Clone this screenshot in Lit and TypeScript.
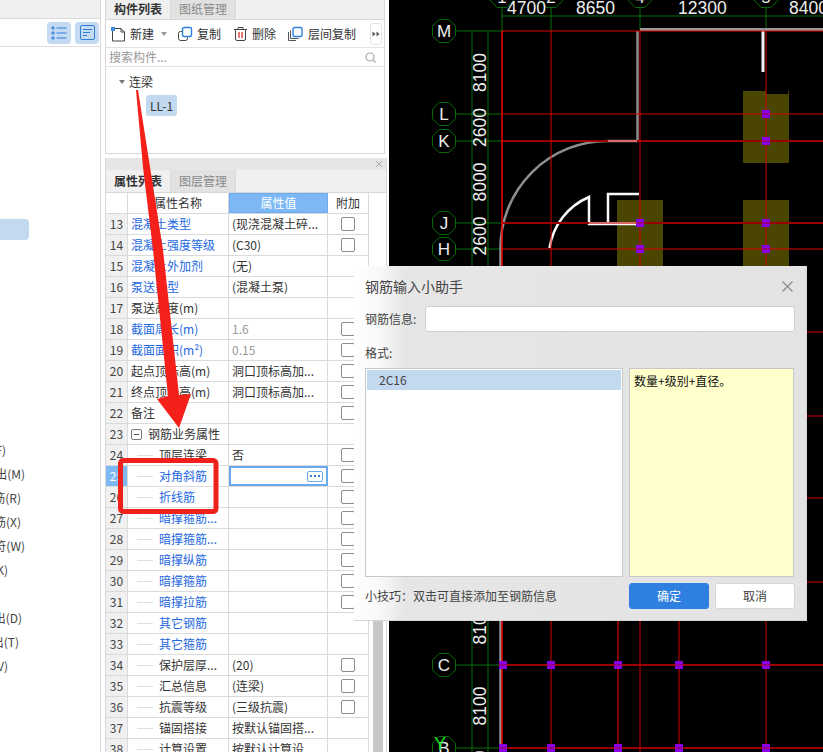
import { LitElement, css, html, svg } from "lit";
import { customElement } from "lit/decorators.js";

type Row = {
    no: number;
    name: string;
    value?: string;
    link?: boolean;
    check?: boolean;
    child?: boolean;
    muted?: boolean;
};

const rows: Row[] = [
    { no: 13, name: "混凝土类型", value: "(现浇混凝土碎...", link: true, check: true },
    { no: 14, name: "混凝土强度等级", value: "(C30)", link: true, check: true },
    { no: 15, name: "混凝土外加剂", value: "(无)", link: true },
    { no: 16, name: "泵送类型", value: "(混凝土泵)", link: true },
    { no: 17, name: "泵送高度(m)" },
    { no: 18, name: "截面周长(m)", value: "1.6", link: true, check: true, muted: true },
    { no: 19, name: "截面面积(m²)", value: "0.15", link: true, check: true, muted: true },
    { no: 20, name: "起点顶标高(m)", value: "洞口顶标高加...", check: true },
    { no: 21, name: "终点顶标高(m)", value: "洞口顶标高加...", check: true },
    { no: 22, name: "备注", check: true },
    { no: 23, name: "钢筋业务属性" },
    { no: 24, name: "顶层连梁", value: "否", child: true, check: true },
    { no: 25, name: "对角斜筋", child: true, link: true, check: true },
    { no: 26, name: "折线筋", child: true, link: true, check: true },
    { no: 27, name: "暗撑箍筋...", child: true, link: true, check: true },
    { no: 28, name: "暗撑箍筋...", child: true, link: true, check: true },
    { no: 29, name: "暗撑纵筋", child: true, link: true, check: true },
    { no: 30, name: "暗撑箍筋", child: true, link: true, check: true },
    { no: 31, name: "暗撑拉筋", child: true, link: true, check: true },
    { no: 32, name: "其它钢筋", child: true, link: true },
    { no: 33, name: "其它箍筋", child: true, link: true },
    { no: 34, name: "保护层厚...", value: "(20)", child: true, check: true },
    { no: 35, name: "汇总信息", value: "(连梁)", child: true, check: true },
    { no: 36, name: "抗震等级", value: "(三级抗震)", child: true, check: true },
    { no: 37, name: "锚固搭接", value: "按默认锚固搭...", child: true },
    { no: 38, name: "计算设置", value: "按默认计算设", child: true },
];

// clipped menu labels on the left edge: [text, right end]
const menu: [string, number][] = [
    ["导入(F)", 6],
    ["导出(M)", 25],
    ["钢筋(R)", 21],
    ["钢筋(X)", 21],
    ["钢符(W)", 25],
    ["设置(K)", 8],
    ["导出(D)", 22],
    ["导出(T)", 19],
    ["视图(V)", 8],
];

const xAxes: [string, number][] = [
    ["1", 502],
    ["2", 551],
    ["4", 640],
    ["5", 766],
];
const yAxes: [string, number][] = [
    ["M", 31],
    ["L", 114],
    ["K", 141],
    ["J", 223],
    ["H", 249],
    ["C", 665],
    ["B", 748],
];

const octagon = (cx: number, cy: number) => {
    const r = 12.5;
    const pts = [];
    for (let i = 0; i < 8; i++) {
        const a = ((i + 0.5) * Math.PI) / 4;
        pts.push(`${cx + r * Math.cos(a)},${cy + r * Math.sin(a)}`);
    }
    return svg`<polygon points=${pts.join(" ")} fill="#000" stroke="#0a6e0a" stroke-width="1"></polygon>`;
};

const square = (x: number, y: number) =>
    svg`<rect x=${x - 4} y=${y - 4} width="8" height="8" fill="#8a00e6"></rect>
        <path d="M${x - 4} ${y}H${x + 4}" stroke="#a0002a" stroke-width="1"></path>`;

const rotated = (text: string, y: number) =>
    svg`<text class="dim" text-anchor="middle" transform="translate(486 ${y}) rotate(-90)">${text}</text>`;

@customElement("app-root")
export class AppRoot extends LitElement {
    static styles = css`
        :host {
            display: flex;
            position: relative;
            width: 823px;
            height: 752px;
            overflow: hidden;
            background: #fff;
            color: #333;
            font: 12px/1 "Noto Sans CJK SC", "Liberation Sans", sans-serif;
        }

        .left {
            flex: none;
            width: 100px;
            border-right: 1px solid #d9d9d9;
            display: flex;
            flex-direction: column;
        }
        .left-top {
            height: 18px;
            background: #f0f0f0;
            border-bottom: 1px solid #dcdcdc;
        }
        .left-tools {
            height: 27px;
            display: flex;
            justify-content: flex-end;
            align-items: center;
            gap: 4px;
            padding-right: 1px;
            border-bottom: 1px solid #dcdcdc;
        }
        .toggle {
            width: 24px;
            height: 22px;
            border-radius: 4px;
            background: #c3daf2;
            display: flex;
            align-items: center;
            justify-content: center;
        }
        .left-selected {
            width: 29px;
            height: 21px;
            margin-top: 172px;
            background: #c3d9f0;
            border-radius: 0 4px 4px 0;
        }
        .left-menu {
            margin-top: 198px;
            height: 240px;
        }
        .left-item {
            height: 24px;
            display: flex;
            justify-content: flex-end;
            align-items: center;
            overflow: hidden;
            white-space: nowrap;
            color: #444;
        }
        .left-gap {
            height: 24px;
        }

        .mid {
            flex: none;
            width: 288px;
            padding-left: 4px;
            box-sizing: border-box;
            display: flex;
            flex-direction: column;
        }
        .panel-top {
            width: 280px;
            height: 154px;
            flex: none;
            box-sizing: border-box;
            border: 1px solid #d8d8d8;
            border-top: 0;
            display: flex;
            flex-direction: column;
        }
        .tabs {
            display: flex;
            background: #f0f0f0;
            border-bottom: 1px solid #d8d8d8;
            flex: none;
        }
        .tab {
            width: 64px;
            display: flex;
            align-items: center;
            justify-content: center;
            font-weight: 700;
            color: #333;
            border-right: 1px solid #d8d8d8;
        }
        .tab.off {
            background: #e2e2e2;
            color: #8a8a8a;
            font-weight: 400;
        }
        .tabs.t19 {
            height: 19px;
        }
        .tabs.t19 .tab {
            padding-bottom: 2px;
        }
        .tabs.t22 {
            height: 22px;
        }
        .toolbar {
            height: 27px;
            flex: none;
            display: flex;
            align-items: center;
            padding-left: 4px;
            border-bottom: 1px solid #e2e2e2;
        }
        .tool {
            display: flex;
            align-items: center;
            gap: 4px;
        }
        .tool.copy {
            margin-left: 10px;
        }
        .tool.del {
            margin-left: 12px;
        }
        .tool.floor {
            margin-left: 11px;
        }
        .caret {
            width: 0;
            height: 0;
            margin: 0 0 0 7px;
            border: 3px solid transparent;
            border-top: 4px solid #999;
            border-bottom: 0;
        }
        .more {
            margin-left: auto;
            margin-right: 2px;
            width: 10px;
            height: 20px;
            border: 1px solid #e4e4e4;
            border-radius: 3px;
            display: flex;
            align-items: center;
            justify-content: center;
        }
        .search {
            height: 18px;
            flex: none;
            display: flex;
            align-items: center;
            justify-content: space-between;
            padding: 0 8px 0 3px;
            border-bottom: 1px solid #e2e2e2;
            color: #9a9a9a;
        }
        .tree {
            flex: 1;
            padding: 7px 0 0 13px;
        }
        .tree-head {
            display: flex;
            align-items: center;
            gap: 4px;
            height: 16px;
        }
        .tree-caret {
            width: 0;
            height: 0;
            border: 3px solid transparent;
            border-top: 4px solid #777;
            border-bottom: 0;
        }
        .chip {
            margin: 5px 0 0 27px;
            width: 31px;
            height: 21px;
            background: #c3d9f0;
            border-radius: 3px;
            display: flex;
            align-items: center;
            justify-content: center;
        }

        .panel-bottom {
            margin-top: 4px;
            width: 280px;
            flex: none;
            border-left: 1px solid #d8d8d8;
            border-right: 1px solid #d8d8d8;
        }
        .closebar {
            height: 12px;
            background: #e6e6e6;
            display: flex;
            justify-content: flex-end;
            align-items: center;
            padding-right: 3px;
        }
        .sheet {
            display: flex;
        }
        .table {
            width: 263px;
            flex: none;
        }
        .scroll {
            flex: 1;
            padding: 230px 3px 0 4px;
        }
        .thumb {
            height: 400px;
            background: #c8c8c8;
        }
        .row {
            display: grid;
            grid-template-columns: 22px 101px 99px 41px;
            height: 21px;
            box-sizing: border-box;
            border-bottom: 1px solid #dadada;
        }
        .row > * {
            border-right: 1px solid #dadada;
            display: flex;
            align-items: center;
            white-space: nowrap;
            overflow: hidden;
            min-width: 0;
        }
        .no {
            background: #f0f0f0;
            justify-content: center;
            color: #444;
        }
        .no.on {
            background: #7db8f5;
            color: #fff;
        }
        .name {
            padding-left: 3px;
        }
        .name.child {
            padding-left: 9px;
            gap: 6px;
        }
        .name.link {
            color: #2468e0;
        }
        .stem {
            flex: none;
            width: 16px;
            height: 1px;
            background: #e0e0e0;
        }
        .minus {
            flex: none;
            width: 11px;
            height: 11px;
            box-sizing: border-box;
            border: 1px solid #777;
            border-radius: 2px;
            margin-right: 6px;
            display: flex;
            align-items: center;
            justify-content: center;
        }
        .minus::before {
            content: "";
            width: 5px;
            height: 1px;
            background: #555;
        }
        .value {
            padding-left: 3px;
        }
        .value.muted {
            color: #999;
        }
        .value.editing {
            box-sizing: border-box;
            border: 1px solid #6aaaf0;
            outline: 1px solid #6aaaf0;
            outline-offset: -2px;
            justify-content: flex-end;
            padding-right: 4px;
        }
        .dots {
            width: 16px;
            height: 11px;
            box-sizing: border-box;
            border: 1px solid #6aaaf0;
            border-radius: 2px;
            display: flex;
            align-items: center;
            justify-content: center;
            gap: 2px;
        }
        .dots i {
            width: 2px;
            height: 2px;
            background: #3a83dc;
        }
        .add {
            justify-content: center;
        }
        .box {
            width: 14px;
            height: 14px;
            box-sizing: border-box;
            border: 1px solid #8c8c8c;
            border-radius: 2px;
        }
        .head {
            height: 21px;
            background: #fff;
        }
        .head > * {
            justify-content: center;
        }
        .head .no {
            background: #fff;
        }
        .head .on {
            background: #7db8f5;
            color: #fff;
            border: 1px solid #6aaaf0;
            box-sizing: border-box;
        }

        .cad {
            flex: none;
            display: block;
            width: 434px;
            height: 752px;
            background: #000;
        }
        .cad text {
            font-family: "Liberation Sans", sans-serif;
            fill: #eee;
        }
        .cad .dim {
            font-size: 17.5px;
        }
        .cad .axis {
            font-size: 17px;
        }
        .cad .mark {
            font-size: 18px;
            fill: #20e020;
        }

        .overlay {
            position: absolute;
            left: 0;
            top: 0;
            width: 823px;
            height: 752px;
            pointer-events: none;
        }

        .dialog {
            position: absolute;
            left: 354px;
            top: 266px;
            width: 453px;
            height: 355px;
            box-sizing: border-box;
            padding: 0 11px;
            display: flex;
            flex-direction: column;
            background: linear-gradient(90deg, #fff 0, #f8f8f8 6%, #e6e6e6 11%, #e3e3e3 100%);
            border: 1px solid #d6d6d6;
            border-width: 0 1px 1px 0;
            color: #444;
        }
        .dlg-title {
            height: 40px;
            flex: none;
            display: flex;
            align-items: center;
            justify-content: space-between;
            font-size: 14px;
            padding-right: 1px;
        }
        .dlg-input {
            display: flex;
            align-items: center;
            gap: 9px;
            height: 26px;
            flex: none;
        }
        .dlg-input i {
            flex: 1;
            height: 100%;
            box-sizing: border-box;
            background: #fff;
            border: 1px solid #cfcfcf;
            border-radius: 3px;
        }
        .dlg-format {
            height: 36px;
            flex: none;
            display: flex;
            align-items: center;
            padding-top: 6px;
            box-sizing: border-box;
        }
        .dlg-panes {
            display: flex;
            gap: 6px;
            height: 209px;
            flex: none;
        }
        .list {
            width: 258px;
            box-sizing: border-box;
            padding: 1px;
            background: #fff;
            border: 1px solid #c8c8c8;
        }
        .list div {
            height: 20px;
            display: flex;
            align-items: center;
            padding-left: 12px;
            background: #c2d9f0;
        }
        .hint {
            width: 165px;
            box-sizing: border-box;
            padding: 6px 4px;
            background: #ffc;
            border: 1px solid #c8c8c8;
            color: #111;
        }
        .dlg-foot {
            display: flex;
            align-items: center;
            gap: 6px;
            margin-top: 6px;
            height: 26px;
            flex: none;
        }
        .tip {
            width: 258px;
        }
        .btn {
            width: 80px;
            height: 26px;
            box-sizing: border-box;
            border-radius: 3px;
            display: flex;
            align-items: center;
            justify-content: center;
            background: #fff;
            border: 1px solid #d6d6d6;
        }
        .btn.primary {
            background: #2e7fe0;
            border-color: #2e7fe0;
            color: #fff;
        }
    `;

    renderToolbar() {
        return html`<div class="toolbar">
            <span class="tool">
                <svg width="16" height="16" viewBox="0 0 16 16">
                    <path d="M3.5 2.5H11l3.5 3.5v9h-12V5" fill="none" stroke="#444"></path>
                    <path d="M11 2.5V6h3.5" fill="none" stroke="#444"></path>
                    <rect x="1" y="1" width="4" height="4" fill="#3d8be0"></rect>
                </svg>
                新建
            </span>
            <i class="caret"></i>
            <span class="tool copy">
                <svg width="16" height="16" viewBox="0 0 16 16">
                    <rect x="1.5" y="5.5" width="9" height="9" rx="2" fill="none" stroke="#444"></rect>
                    <rect x="5.5" y="1.5" width="9" height="9" rx="1.5" fill="#fff" stroke="#2e7fe0" stroke-width="1.4"></rect>
                </svg>
                复制
            </span>
            <span class="tool del">
                <svg width="15" height="16" viewBox="0 0 15 16">
                    <path d="M1 3.5h13M5 3V1.5h5V3M2.5 3.5V13a1.5 1.5 0 0 0 1.5 1.5h7a1.5 1.5 0 0 0 1.5-1.5V3.500" fill="none" stroke="#444"></path>
                    <path d="M6 6v6M9 6v6" stroke="#e02020" stroke-width="1.2"></path>
                </svg>
                删除
            </span>
            <span class="tool floor">
                <svg width="17" height="16" viewBox="0 0 17 16">
                    <path d="M1.5 6v8.5H9M3.5 4.500v8h8" fill="none" stroke="#555"></path>
                    <rect x="6" y="1.5" width="9" height="9" rx="1.5" fill="#fff" stroke="#2e7fe0" stroke-width="1.4"></rect>
                </svg>
                层间复制
            </span>
            <span class="more">
                <svg width="8" height="6" viewBox="0 0 8 6">
                    <path d="M0.5 0.5L3.5 3L0.5 5.500zM4.500 0.500L7.500 3L4.500 5.500z" fill="#555"></path>
                </svg>
            </span>
        </div>`;
    }

    renderRow(r: Row) {
        const editing = r.no === 25;
        let name;
        if (r.no === 23) {
            name = html`<div class="name"><i class="minus"></i>${r.name}</div>`;
        } else if (r.child) {
            name = html`<div class="name child ${r.link ? "link" : ""}"><i class="stem"></i>${r.name}</div>`;
        } else {
            name = html`<div class="name ${r.link ? "link" : ""}">${r.name}</div>`;
        }
        return html`<div class="row">
            <div class="no ${editing ? "on" : ""}">${r.no}</div>
            ${name}
            ${editing
                ? html`<div class="value editing"><span class="dots"><i></i><i></i><i></i></span></div>`
                : html`<div class="value ${r.muted ? "muted" : ""}">${r.value ?? ""}</div>`}
            <div class="add">${r.check ? html`<i class="box"></i>` : ""}</div>
        </div>`;
    }

    renderCad() {
        const hLines: [number, string, number][] = [
            [31, "#e00000", 1],
            [114, "#d00000", 1],
            [141, "#9a0000", 2],
            [223, "#9a0000", 2],
            [249, "#e00000", 1],
            [332, "#d00000", 1],
            [416, "#d00000", 1],
            [498, "#d00000", 1],
            [582, "#d00000", 1],
            [665, "#9a0000", 2],
            [748, "#9a0000", 2],
        ];
        const vLines: [number, string, number, number][] = [
            [502, "#f00000", 1.5, 31],
            [551, "#d80000", 1, 31],
            [618, "#b00000", 1.5, 400],
            [640, "#d80000", 1, 31],
            [679, "#d80000", 1, 400],
            [766, "#c80000", 1, 31],
        ];
        return html`<svg class="cad" viewBox="389 0 434 752">
            <rect x="617" y="200" width="46" height="100" fill="#4a4500"></rect>
            <rect x="743" y="200" width="46" height="100" fill="#4a4500"></rect>
            <path d="M743 91h23v3h22v-3h1v72h-46z" fill="#4a4500"></path>

            <path d="M502 16H823M472 31V752M488 31V752" stroke="#0a6e0a" fill="none"></path>
            ${xAxes.map(
                ([l, x]) => svg`<path d="M${x} 0V31" stroke="#0a6e0a"></path>
                    ${octagon(x, -4)}
                    <text class="axis" x=${x} y="3" text-anchor="middle">${l}</text>`,
            )}
            ${yAxes.map(
                ([l, y]) => svg`<path d="M456 ${y}H502" stroke="#0a6e0a"></path>
                    ${octagon(444, y)}
                    <text class="axis" x="444" y=${y + 6} text-anchor="middle">${l}</text>`,
            )}

            <path d="M640 29.5H823" stroke="#9a9a9a" stroke-width="3"></path>
            <path d="M637.5 31V141H608A107 107 0 0 0 500.500 249V752" fill="none" stroke="#8e8e8e" stroke-width="2.500"></path>
            <path d="M763 31V72" stroke="#f4f4f4" stroke-width="3"></path>
            <path d="M549.5 248C553 225 568 206 589 197V224H636M608 223V194H639" fill="none" stroke="#fafafa" stroke-width="2.500"></path>

            ${hLines.map(([y, c, w]) => svg`<path d="M502 ${y}H823" stroke=${c} stroke-width=${w}></path>`)}
            ${vLines.map(([x, c, w, y]) => svg`<path d="M${x} ${y}V752" stroke=${c} stroke-width=${w}></path>`)}
            <path d="M589 223H636M608 141H637" stroke="#f08a8a" stroke-width="1.500"></path>

            ${[
                [766, 114],
                [766, 141],
                [640, 223],
                [640, 249],
                [766, 223],
                [766, 249],
            ].map(([x, y]) => square(x, y))}
            ${[665, 748].map((y) => [503, 551, 618, 679, 766].map((x) => square(x, y)))}

            <text class="dim" x="507" y="14">4700</text>
            <text class="dim" x="576" y="14">8650</text>
            <text class="dim" x="678" y="14">12300</text>
            <text class="dim" x="789" y="14">8400</text>
            ${rotated("8100", 72.5)} ${rotated("2600", 127.5)} ${rotated("8000", 182)} ${rotated("2600", 236)}
            ${rotated("8100", 625)} ${rotated("8100", 706)} ${rotated("2600", 770)}
            <text class="mark" x="434" y="750">Y</text>
        </svg>`;
    }

    render() {
        return html`
            <div class="left">
                <div class="left-top"></div>
                <div class="left-tools">
                    <span class="toggle">
                        <svg width="16" height="14" viewBox="0 0 16 14">
                            <path d="M5.5 2H15.5M5.5 7H15.5M5.5 12H15.5" stroke="#2f7ddb" stroke-width="1.2"></path>
                            <path d="M1 1h2v2H1zM1 6h2v2H1zM1 11h2v2H1z" fill="none" stroke="#2f7ddb"></path>
                        </svg>
                    </span>
                    <span class="toggle">
                        <svg width="15" height="15" viewBox="0 0 15 15">
                            <rect x="0.5" y="0.5" width="14" height="14" rx="1.5" fill="none" stroke="#2f7ddb"></rect>
                            <path d="M3 4.5H12M3 7.5H10M3 10.5H7" stroke="#2f7ddb"></path>
                        </svg>
                    </span>
                </div>
                <div class="left-selected"></div>
                <div class="left-menu">
                    ${menu.map(
                        ([t, end], i) => html`${i === 6 ? html`<div class="left-gap"></div>` : ""}
                            <div class="left-item" style="width:${end}px">${t}</div>`,
                    )}
                </div>
            </div>

            <div class="mid">
                <div class="panel-top">
                    <div class="tabs t19">
                        <div class="tab">构件列表</div>
                        <div class="tab off">图纸管理</div>
                    </div>
                    ${this.renderToolbar()}
                    <div class="search">
                        <span>搜索构件...</span>
                        <svg width="11" height="11" viewBox="0 0 11 11">
                            <circle cx="5" cy="5" r="4" fill="none" stroke="#aaa" stroke-width="1.2"></circle>
                            <path d="M8 8l2.5 2.5" stroke="#aaa" stroke-width="1.2"></path>
                        </svg>
                    </div>
                    <div class="tree">
                        <div class="tree-head"><i class="tree-caret"></i>连梁</div>
                        <div class="chip">LL-1</div>
                    </div>
                </div>
                <div class="panel-bottom">
                    <div class="closebar">
                        <svg width="8" height="8" viewBox="0 0 8 8">
                            <path d="M1 1l6 6M7 1l-6 6" stroke="#aaa"></path>
                        </svg>
                    </div>
                    <div class="tabs t22">
                        <div class="tab">属性列表</div>
                        <div class="tab off">图层管理</div>
                    </div>
                    <div class="sheet">
                        <div class="table">
                            <div class="row head">
                                <div class="no"></div>
                                <div>属性名称</div>
                                <div class="on">属性值</div>
                                <div>附加</div>
                            </div>
                            ${rows.map((r) => this.renderRow(r))}
                        </div>
                        <div class="scroll"><div class="thumb"></div></div>
                    </div>
                </div>
            </div>

            ${this.renderCad()}

            <svg class="overlay" viewBox="0 0 823 752">
                <path d="M136 90L138 90L150 167L163 250L179 395L191 394L179 428L157 399L168 396L153 250L143 167Z" fill="#f5201a"></path>
                <rect x="120.500" y="460.500" width="95.500" height="51" rx="3" fill="none" stroke="#f0201a" stroke-width="5"></rect>
            </svg>

            <div class="dialog">
                <div class="dlg-title">
                    <span>钢筋输入小助手</span>
                    <svg width="13" height="13" viewBox="0 0 13 13">
                        <path d="M1.500 1.500l10 10M11.500 1.500l-10 10" stroke="#888" stroke-width="1.200"></path>
                    </svg>
                </div>
                <div class="dlg-input"><span>钢筋信息:</span><i></i></div>
                <div class="dlg-format">格式:</div>
                <div class="dlg-panes">
                    <div class="list"><div>2C16</div></div>
                    <div class="hint">数量+级别+直径。</div>
                </div>
                <div class="dlg-foot">
                    <span class="tip">小技巧：双击可直接添加至钢筋信息</span>
                    <span class="btn primary">确定</span>
                    <span class="btn">取消</span>
                </div>
            </div>
        `;
    }
}
